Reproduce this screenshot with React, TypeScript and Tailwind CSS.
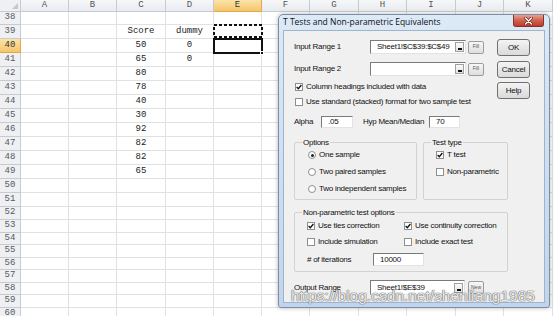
const cols = [
  { l: 'A', w: 'w-[48px]' },
  { l: 'B', w: 'w-[48px]' },
  { l: 'C', w: 'w-[49px]' },
  { l: 'D', w: 'w-[48px]' },
  { l: 'E', w: 'w-[48px]' },
  { l: 'F', w: 'w-[48px]' },
  { l: 'G', w: 'w-[49px]' },
  { l: 'H', w: 'w-[48px]' },
  { l: 'I', w: 'w-[49px]' },
  { l: 'J', w: 'w-[48px]' },
  { l: 'K', w: 'w-[49px]' },
]

const rows: { n: number; h: string; c?: string; d?: string }[] = [
  { n: 38, h: 'h-[13px]' },
  { n: 39, h: 'h-[14px]', c: 'Score', d: 'dummy' },
  { n: 40, h: 'h-[14px]', c: '50', d: '0' },
  { n: 41, h: 'h-[14px]', c: '65', d: '0' },
  { n: 42, h: 'h-[14px]', c: '80' },
  { n: 43, h: 'h-[14px]', c: '78' },
  { n: 44, h: 'h-[14px]', c: '40' },
  { n: 45, h: 'h-[14px]', c: '30' },
  { n: 46, h: 'h-[14px]', c: '92' },
  { n: 47, h: 'h-[14px]', c: '82' },
  { n: 48, h: 'h-[14px]', c: '82' },
  { n: 49, h: 'h-[14px]', c: '65' },
  { n: 50, h: 'h-[14px]' },
  { n: 51, h: 'h-[14px]' },
  { n: 52, h: 'h-[13px]' },
  { n: 53, h: 'h-[13px]' },
  { n: 54, h: 'h-[12px]' },
  { n: 55, h: 'h-[13px]' },
  { n: 56, h: 'h-[12px]' },
  { n: 57, h: 'h-[13px]' },
  { n: 58, h: 'h-[12px]' },
  { n: 59, h: 'h-[13px]' },
  { n: 60, h: 'h-[12px]' },
]

function Sheet() {
  return (
    <div className="flex flex-col font-['Liberation_Mono',monospace] text-[9px] text-[#222]">
      <div className="flex h-[12px]">
        <div className="relative w-[21px] shrink-0 border-r border-b border-[#c6cbd1] bg-[#eef0f3]">
          <svg className="absolute right-[2px] bottom-[2px]" width="6" height="6" viewBox="0 0 6 6">
            <path d="M6 0 L6 6 L0 6 Z" fill="#c3c7cc" />
          </svg>
        </div>
        {cols.map((c) => (
          <div
            key={c.l}
            className={`${c.w} flex shrink-0 items-center justify-center border-r border-b ${
              c.l === 'E'
                ? 'border-[#e0a848] bg-gradient-to-b from-[#fbe3a8] to-[#f4c56a] text-[#333]'
                : 'border-[#c6cbd1] bg-gradient-to-b from-[#f6f7f9] to-[#e8ebef] text-[#555]'
            }`}
          >
            {c.l}
          </div>
        ))}
      </div>
      {rows.map((r) => (
        <div key={r.n} className={`flex ${r.h}`}>
          <div
            className={`flex w-[21px] shrink-0 items-center justify-center overflow-hidden border-r border-b ${
              r.n === 40
                ? 'border-[#e0a848] bg-gradient-to-b from-[#fbe3a8] to-[#f4c56a] text-[#333]'
                : 'border-[#c6cbd1] bg-[#eef0f3] text-[#5a5a5a]'
            }`}
          >
            {r.n}
          </div>
          {cols.map((c, i) => (
            <div
              key={c.l}
              className={`${c.w} flex shrink-0 items-center justify-center border-r border-b border-[#dfe1e4]`}
            >
              {i === 2 ? r.c : i === 3 ? r.d : null}
            </div>
          ))}
        </div>
      ))}
    </div>
  )
}

function Check({ on }: { on?: boolean }) {
  return (
    <span className="flex h-[8px] w-[8px] shrink-0 items-center justify-center border border-[#8e8f8f] bg-white">
      {on && (
        <svg width="6" height="6" viewBox="0 0 6 6">
          <path d="M0.6 3 L2.3 4.7 L5.4 1" fill="none" stroke="#111" strokeWidth="1.3" />
        </svg>
      )}
    </span>
  )
}

function Radio({ on }: { on?: boolean }) {
  return (
    <span className="flex h-[8px] w-[8px] shrink-0 items-center justify-center rounded-full border border-[#8e8f8f] bg-white">
      {on && <span className="h-[3px] w-[3px] rounded-full bg-[#222]" />}
    </span>
  )
}

function CheckRow({ on, label, className = '' }: { on?: boolean; label: string; className?: string }) {
  return (
    <div className={`flex h-[12px] items-center gap-[3px] whitespace-nowrap ${className}`}>
      <Check on={on} />
      <span>{label}</span>
    </div>
  )
}

function RadioRow({ on, label }: { on?: boolean; label: string }) {
  return (
    <div className="flex h-[12px] items-center gap-[3px] whitespace-nowrap">
      <Radio on={on} />
      <span>{label}</span>
    </div>
  )
}

function Field({ className, children, drop }: { className: string; children?: string; drop?: boolean }) {
  return (
    <div
      className={`flex shrink-0 items-center border border-t-[#7a7a7a] border-l-[#7a7a7a] border-r-[#e3e3e3] border-b-[#e3e3e3] bg-white ${className}`}
    >
      <span className="flex-1 overflow-hidden pl-[6px] whitespace-nowrap">{children}</span>
      {drop && (
        <span className="mr-[1px] flex h-[10px] w-[9px] shrink-0 items-end justify-center border border-[#a0a0a0] bg-gradient-to-b from-[#fafafa] to-[#e4e4e4] pb-[1px]">
          <span className="h-[2px] w-[4px] bg-[#111]" />
        </span>
      )}
    </div>
  )
}

function Mini({ label }: { label: string }) {
  return (
    <span className="ml-[2px] flex h-[13px] w-[16px] shrink-0 items-center justify-center rounded-[2px] border border-[#9c9c9c] bg-gradient-to-b from-[#f7f7f7] to-[#dedede] text-[5px] tracking-normal text-[#555]">
      {label}
    </span>
  )
}

function Btn({ label, className = '' }: { label: string; className?: string }) {
  return (
    <div
      className={`flex h-[17px] w-[33px] items-center justify-center rounded-[3px] border border-[#707070] bg-gradient-to-b from-[#f4f4f4] to-[#dadada] ${className}`}
    >
      {label}
    </div>
  )
}

function Group({ title, className, children }: { title: string; className: string; children: React.ReactNode }) {
  return (
    <div className={`relative shrink-0 rounded-[2px] border border-[#d2d2d2] ${className}`}>
      <span className="absolute -top-[6px] left-[7px] bg-[#f0f0f0] px-[1px] leading-[11px] whitespace-nowrap">
        {title}
      </span>
      {children}
    </div>
  )
}

function Dialog() {
  return (
    <div className="absolute top-[14px] left-[278px] flex h-[294px] w-[272px] flex-col rounded-t-[5px] rounded-b-[3px] border border-[#7b8ea4] bg-gradient-to-b from-[#dce9f7] to-[#c0d5ed] px-[4px] pb-[4px] shadow-[0_0_4px_rgba(0,0,0,0.3)]">
      <div className="flex h-[15px] shrink-0 items-start justify-between">
        <span className="self-center font-['Open_Sans',sans-serif] text-[8.5px] leading-none whitespace-nowrap text-[#111]">
          T Tests and Non-parametric Equivalents
        </span>
        <span className="mr-[1px] flex h-[12px] w-[31px] items-center justify-center rounded-b-[3px] border border-t-0 border-[#8a2f26] bg-gradient-to-b from-[#e9a08f] via-[#d0604f] to-[#c0392b]">
          <svg width="9" height="8" viewBox="0 0 9 8">
            <path d="M1.5 1 L7.5 7 M7.5 1 L1.5 7" stroke="#5a1a14" strokeWidth="2.6" strokeLinecap="round" />
            <path d="M1.5 1 L7.5 7 M7.5 1 L1.5 7" stroke="#fff" strokeWidth="1.5" strokeLinecap="round" />
          </svg>
        </span>
      </div>
      <div className="flex flex-1 flex-col border border-[#9fb3ca] bg-[#f0f0f0] px-[10px] font-['Liberation_Sans',Arial,sans-serif] text-[8px] tracking-[-0.25px] whitespace-nowrap text-[#111]">
        <div className="flex">
          <div className="flex w-[203px] flex-col pt-[9px]">
            <div className="flex h-[14px] items-center">
              <span className="w-[76px] shrink-0">Input Range 1</span>
              <Field className="h-[14px] w-[96px]" drop>
                Sheet1!$C$39:$C$49
              </Field>
              <Mini label="Fill" />
            </div>
            <div className="mt-[8px] flex h-[14px] items-center">
              <span className="w-[76px] shrink-0">Input Range 2</span>
              <Field className="h-[14px] w-[96px]" drop />
              <Mini label="Fill" />
            </div>
            <CheckRow on label="Column headings included with data" className="mt-[5px] pl-[1px]" />
            <CheckRow label="Use standard (stacked) format for two sample test" className="mt-[3px] pl-[1px]" />
          </div>
          <div className="flex flex-col pt-[8px]">
            <Btn label="OK" />
            <Btn label="Cancel" className="mt-[5px]" />
            <Btn label="Help" className="mt-[4px]" />
          </div>
        </div>

        <div className="mt-[8px] flex h-[12px] items-center">
          <span className="w-[27px] shrink-0">Alpha</span>
          <Field className="h-[12px] w-[32px]">.05</Field>
          <span className="ml-[10px] w-[66px] shrink-0">Hyp Mean/Median</span>
          <Field className="h-[12px] w-[31px]">70</Field>
        </div>

        <div className="mt-[14px] flex h-[58px]">
          <Group title="Options" className="h-[58px] w-[123px]">
            <div className="flex flex-col gap-[5px] pt-[6px] pl-[13px]">
              <RadioRow on label="One sample" />
              <RadioRow label="Two paired samples" />
              <RadioRow label="Two independent samples" />
            </div>
          </Group>
          <Group title="Test type" className="ml-[6px] h-[58px] w-[85px]">
            <div className="flex flex-col gap-[5px] pt-[6px] pl-[12px]">
              <CheckRow on label="T test" />
              <CheckRow label="Non-parametric" />
            </div>
          </Group>
        </div>

        <Group title="Non-parametric test options" className="mt-[12px] h-[60px] w-[214px]">
          <div className="flex flex-col pt-[7px] pl-[12px]">
            <div className="flex">
              <CheckRow on label="Use ties correction" className="w-[97px]" />
              <CheckRow on label="Use continuity correction" />
            </div>
            <div className="mt-[4px] flex">
              <CheckRow label="Include simulation" className="w-[97px]" />
              <CheckRow label="Include exact test" />
            </div>
            <div className="mt-[5px] flex h-[13px] items-center">
              <span className="w-[66px] shrink-0">&#35; of iterations</span>
              <Field className="h-[13px] w-[51px]">10000</Field>
            </div>
          </div>
        </Group>

        <div className="mt-[8px] flex h-[15px] items-center">
          <span className="w-[76px] shrink-0">Output Range</span>
          <Field className="h-[15px] w-[95px]" drop>
            Sheet1!$E$39
          </Field>
          <span className="ml-[1px] flex">
            <Mini label="New" />
          </span>
        </div>
      </div>
    </div>
  )
}

export default function App() {
  return (
    <div className="relative h-[316px] w-[554px] overflow-hidden bg-white">
      <Sheet />
      <svg className="absolute top-[24px] left-[213px]" width="50" height="14" viewBox="0 0 50 14">
        <rect x="1" y="1" width="48" height="12" fill="none" stroke="#111" strokeWidth="2" strokeDasharray="3 2" />
      </svg>
      <div className="absolute top-[38px] left-[213px] h-[16px] w-[50px] border-2 border-[#111]" />
      <div className="absolute top-[51px] left-[260px] h-[4px] w-[4px] border border-white bg-[#111]" />
      <Dialog />
      <div className="pointer-events-none absolute top-[286px] left-[291px] font-['Liberation_Sans',Arial,sans-serif] text-[15.5px] leading-[20px] whitespace-nowrap text-white/85 [text-shadow:0_0_1px_#6a6a6a,0_0_1px_#6a6a6a,0_0_1px_#6a6a6a]">
        https://blog.csdn.net/shenliang1985
      </div>
    </div>
  )
}
